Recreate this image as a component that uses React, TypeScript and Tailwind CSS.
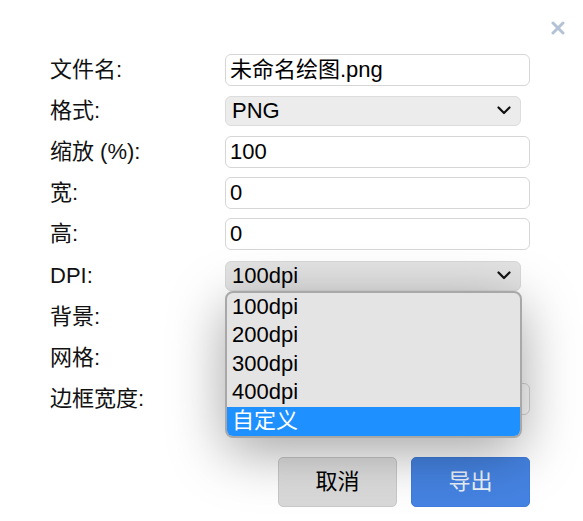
import React from "react";

const font = { fontFamily: '"Liberation Sans", Arial, "Noto Sans CJK SC", sans-serif' };

function Chevron() {
  return (
    <svg width="14" height="9" viewBox="0 0 14 9" className="shrink-0">
      <polyline points="1.5,1.5 7,7 12.5,1.5" fill="none" stroke="#111" strokeWidth="2.2" strokeLinecap="round" strokeLinejoin="round" />
    </svg>
  );
}

function TextInput({ value }: { value: string }) {
  return (
    <div className="w-[305px] h-[32px] rounded-[6px] border border-[#d6d6d6] bg-white flex items-center pl-[4px] text-[22px] text-black leading-none">
      {value}
    </div>
  );
}

function Select({ value, dark }: { value: string; dark?: boolean }) {
  return (
    <div
      className={
        "w-[296px] h-[30px] rounded-[6px] border flex items-center justify-between pl-[6px] pr-[9px] text-[22px] text-black leading-none " +
        (dark ? "bg-[#e3e3e3] border-[#d8d8d8]" : "bg-[#ececec] border-[#dcdcdc]")
      }
    >
      <span>{value}</span>
      <Chevron />
    </div>
  );
}

function Label({ children }: { children: React.ReactNode }) {
  return <div className="text-[22px] text-[#111] leading-none">{children}</div>;
}

export default function App() {
  const options = ["100dpi", "200dpi", "300dpi", "400dpi"];
  return (
    <div className="w-[583px] h-[521px] bg-white overflow-hidden flex flex-col" style={font}>
      <div className="h-[49px] flex justify-end items-start pt-[21px] pr-[18px]">
        <svg width="14" height="14" viewBox="0 0 14 14">
          <path d="M2 2 L12 12 M12 2 L2 12" stroke="#b4c2d6" strokeWidth="3" strokeLinecap="round" />
        </svg>
      </div>
      <div className="grid grid-cols-[175px_1fr] auto-rows-[41.2px] items-center pl-[50px]">
        <Label>文件名:</Label>
        <TextInput value="未命名绘图.png" />
        <Label>格式:</Label>
        <Select value="PNG" />
        <Label>缩放 (%):</Label>
        <TextInput value="100" />
        <Label>宽:</Label>
        <TextInput value="0" />
        <Label>高:</Label>
        <TextInput value="0" />
        <Label>DPI:</Label>
        <div className="relative z-10">
          <Select value="100dpi" dark />
          <div className="absolute left-0 top-[30px] w-[297px] h-[147px] rounded-[8px] border-2 border-[#a8a8a8] bg-[#e4e4e4] overflow-hidden shadow-[0_14px_55px_rgba(0,0,0,0.36)] flex flex-col">
            {options.map((o) => (
              <div key={o} className="h-[28.5px] shrink-0 flex items-center pl-[5px] text-[22px] text-black leading-none">
                {o}
              </div>
            ))}
            <div className="flex-1 bg-[#1e90ff] flex items-center pl-[5px] text-[22px] text-white leading-none">
              自定义
            </div>
          </div>
        </div>
        <Label>背景:</Label>
        <div />
        <Label>网格:</Label>
        <div />
        <Label>边框宽度:</Label>
        <TextInput value="0" />
      </div>
      <div className="flex justify-end gap-[14px] pr-[53px] mt-[37px]">
        <button className="w-[119px] h-[50px] rounded-[5px] border border-[#c9c9c9] bg-gradient-to-b from-[#e2e2e2] to-[#d8d8d8] text-[22px] text-black flex items-center justify-center">
          取消
        </button>
        <button className="w-[119px] h-[50px] rounded-[5px] border border-[#3f7ddc] bg-[#4583e2] text-[22px] text-[#eef3fb] flex items-center justify-center">
          导出
        </button>
      </div>
    </div>
  );
}
